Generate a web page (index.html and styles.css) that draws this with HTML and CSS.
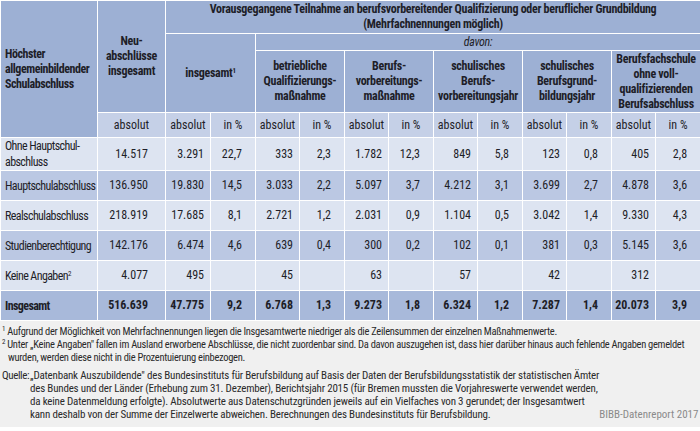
FILE: index.html
```html
<!DOCTYPE html>
<html lang="de">
<head>
<meta charset="utf-8">
<title>BIBB Tabelle</title>
<link rel="stylesheet" href="styles.css">
</head>
<body>
<div class="page">
<table class="tbl">
  <colgroup>
    <col class="c-label"><col class="c-neu">
    <col class="c-a"><col class="c-p"><col class="c-a2"><col class="c-p">
    <col class="c-a2"><col class="c-p"><col class="c-a2"><col class="c-p">
    <col class="c-a2"><col class="c-p"><col class="c-a2"><col class="c-p">
  </colgroup>
  <thead>
    <tr class="h1">
      <th rowspan="4" class="hl">Höchster<br>allgemeinbildender<br>Schulabschluss</th>
      <th rowspan="3">Neu-<br>abschlüsse<br>insgesamt</th>
      <th colspan="12">Vorausgegangene Teilnahme an berufsvorbereitender Qualifizierung oder beruflicher Grundbildung<br>(Mehrfachnennungen möglich)</th>
    </tr>
    <tr class="h2">
      <th colspan="2" rowspan="2">insgesamt<sup>1</sup></th>
      <th colspan="10" class="davon">davon:</th>
    </tr>
    <tr class="h3">
      <th colspan="2">betriebliche<br>Qualifizierungs-<br>maßnahme</th>
      <th colspan="2">Berufs-<br>vorbereitungs-<br>maßnahme</th>
      <th colspan="2">schulisches<br>Berufs-<br>vorbereitungsjahr</th>
      <th colspan="2">schulisches<br>Berufsgrund-<br>bildungsjahr</th>
      <th colspan="2">Berufsfachschule<br>ohne voll-<br>qualifizierenden<br>Berufsabschluss</th>
    </tr>
    <tr class="h4">
      <th>absolut</th>
      <th>absolut</th><th>in %</th>
      <th>absolut</th><th>in %</th>
      <th>absolut</th><th>in %</th>
      <th>absolut</th><th>in %</th>
      <th>absolut</th><th>in %</th>
      <th>absolut</th><th>in %</th>
    </tr>
  </thead>
  <tbody>
    <tr class="light">
      <td class="lab">Ohne Hauptschul-<br>abschluss</td>
      <td class="neu">14.517</td>
      <td class="a">3.291</td><td class="p">22,7</td>
      <td class="a">333</td><td class="p">2,3</td>
      <td class="a">1.782</td><td class="p">12,3</td>
      <td class="a">849</td><td class="p">5,8</td>
      <td class="a">123</td><td class="p">0,8</td>
      <td class="a">405</td><td class="p">2,8</td>
    </tr>
    <tr class="mid">
      <td class="lab">Hauptschulabschluss</td>
      <td class="neu">136.950</td>
      <td class="a">19.830</td><td class="p">14,5</td>
      <td class="a">3.033</td><td class="p">2,2</td>
      <td class="a">5.097</td><td class="p">3,7</td>
      <td class="a">4.212</td><td class="p">3,1</td>
      <td class="a">3.699</td><td class="p">2,7</td>
      <td class="a">4.878</td><td class="p">3,6</td>
    </tr>
    <tr class="light">
      <td class="lab">Realschulabschluss</td>
      <td class="neu">218.919</td>
      <td class="a">17.685</td><td class="p">8,1</td>
      <td class="a">2.721</td><td class="p">1,2</td>
      <td class="a">2.031</td><td class="p">0,9</td>
      <td class="a">1.104</td><td class="p">0,5</td>
      <td class="a">3.042</td><td class="p">1,4</td>
      <td class="a">9.330</td><td class="p">4,3</td>
    </tr>
    <tr class="mid">
      <td class="lab">Studienberechtigung</td>
      <td class="neu">142.176</td>
      <td class="a">6.474</td><td class="p">4,6</td>
      <td class="a">639</td><td class="p">0,4</td>
      <td class="a">300</td><td class="p">0,2</td>
      <td class="a">102</td><td class="p">0,1</td>
      <td class="a">381</td><td class="p">0,3</td>
      <td class="a">5.145</td><td class="p">3,6</td>
    </tr>
    <tr class="light">
      <td class="lab">Keine Angaben<sup>2</sup></td>
      <td class="neu">4.077</td>
      <td class="a">495</td><td class="p"></td>
      <td class="a">45</td><td class="p"></td>
      <td class="a">63</td><td class="p"></td>
      <td class="a">57</td><td class="p"></td>
      <td class="a">42</td><td class="p"></td>
      <td class="a">312</td><td class="p"></td>
    </tr>
    <tr class="total">
      <td class="lab">Insgesamt</td>
      <td class="neu">516.639</td>
      <td class="a">47.775</td><td class="p">9,2</td>
      <td class="a">6.768</td><td class="p">1,3</td>
      <td class="a">9.273</td><td class="p">1,8</td>
      <td class="a">6.324</td><td class="p">1,2</td>
      <td class="a">7.287</td><td class="p">1,4</td>
      <td class="a">20.073</td><td class="p">3,9</td>
    </tr>
  </tbody>
</table>
<div class="notes">
  <p class="fn fn1"><sup>1</sup> Aufgrund der Möglichkeit von Mehrfachnennungen liegen die Insgesamtwerte niedriger als die Zeilensummen der einzelnen Maßnahmenwerte.</p>
  <p class="fn fn2"><sup>2</sup> Unter „Keine Angaben" fallen im Ausland erworbene Abschlüsse, die nicht zuordenbar sind. Da davon auszugehen ist, dass hier darüber hinaus auch fehlende Angaben gemeldet<br>wurden, werden diese nicht in die Prozentuierung einbezogen.</p>
  <div class="src">
    <span class="src-label">Quelle:</span>
    <p class="src-text">„Datenbank Auszubildende" des Bundesinstituts für Berufsbildung auf Basis der Daten der Berufsbildungsstatistik der statistischen Ämter<br>des Bundes und der Länder (Erhebung zum 31. Dezember), Berichtsjahr 2015 (für Bremen mussten die Vorjahreswerte verwendet werden,<br>da keine Datenmeldung erfolgte). Absolutwerte aus Datenschutzgründen jeweils auf ein Vielfaches von 3 gerundet; der Insgesamtwert<br>kann deshalb von der Summe der Einzelwerte abweichen. Berechnungen des Bundesinstituts für Berufsbildung.</p>
    <span class="credit">BIBB-Datenreport 2017</span>
  </div>
</div>
</div>
</body>
</html>
```

FILE: styles.css
```css
html, body {
  margin: 0;
  padding: 0;
  background: #ffffff;
}
.page {
  width: 700px;
  font-family: "Roboto Condensed", "Liberation Sans Narrow", "Liberation Sans", sans-serif;
  color: #1e1e28;
}
.tbl {
  width: 700px;
  table-layout: fixed;
  border-collapse: collapse;
  font-size: 12px;
  line-height: 15px;
}
.c-label { width: 97px; }
.c-neu { width: 68px; }
.c-a { width: 45px; }
.c-a2 { width: 44px; }
.c-p { width: 45px; }
.tbl th, .tbl td {
  border: 1px solid #ffffff;
  padding: 0;
  overflow: hidden;
  white-space: nowrap;
}
.tbl th {
  background: #9db0d4;
  font-weight: bold;
  text-align: center;
  vertical-align: middle;
  letter-spacing: -0.3px;
}
.tbl th.hl {
  text-align: left;
  padding-left: 4px;
  letter-spacing: -0.45px;
}
.tbl sup {
  font-size: 7px;
  line-height: 0;
  vertical-align: 4px;
}
.h1 { height: 33px; }
.h2 { height: 17px; }
.h3 { height: 62px; }
.h4 { height: 25px; }
.tbl th.davon {
  font-style: italic;
  font-weight: normal;
  text-align: center;
}
.h4 th {
  background: #c5d0e7;
  font-weight: normal;
  letter-spacing: 0;
}
.h4 th.hl { background: #9db0d4; }
.tbl tbody tr { height: 30px; }
.tbl td {
  text-align: right;
  vertical-align: middle;
}
.tbl td.lab {
  text-align: left;
  padding-left: 4px;
  letter-spacing: -0.6px;
  line-height: 16px;
}
.tbl td.neu { padding-right: 17px; }
.tbl td.a { padding-right: 6px; }
.tbl td.p { padding-right: 13px; }
.light td { background: #dde4f1; }
.mid td { background: #bbc8e3; }
.total td {
  background: #a8b9da;
  font-weight: bold;
}
.notes {
  background: #f0f0f0;
  font-size: 11px;
  line-height: 13px;
  color: #2a2a2a;
  padding: 4px 0 6px 0;
  white-space: nowrap;
  letter-spacing: -0.2px;
}
.notes p { margin: 0; }
.notes sup {
  font-size: 7px;
  line-height: 0;
  vertical-align: 4px;
}
.fn {
  font-size: 10.5px;
  letter-spacing: -0.3px;
}
.fn1 { padding-left: 2px; }
.fn2 {
  padding-left: 8px;
  text-indent: -6px;
}
.src {
  display: flex;
  align-items: flex-end;
  margin-top: 5px;
  padding-left: 2px;
}
.src-label {
  width: 28px;
  flex: none;
  align-self: flex-start;
  letter-spacing: -0.4px;
}
.src-text {
  flex: none;
}
.credit {
  margin-left: auto;
  padding-right: 5px;
  color: #8a8a8a;
  letter-spacing: 0;
}
```
